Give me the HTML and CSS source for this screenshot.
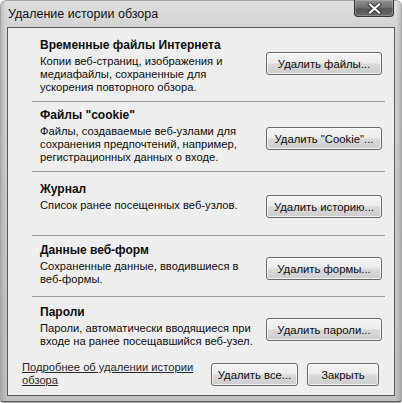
FILE: index.html
```html
<!DOCTYPE html>
<html lang="ru">
<head>
<meta charset="utf-8">
<title>Удаление истории обзора</title>
<link rel="stylesheet" href="styles.css">
</head>
<body>
<div class="window">
  <div class="titlebar">
    <span class="caption">Удаление истории обзора</span>
    <div class="close" aria-label="Закрыть">
      <svg width="15" height="11" viewBox="0 0 15 11">
        <path d="M3 1.5 L12 9.5 M12 1.5 L3 9.5" stroke="#333333" stroke-width="4" stroke-linecap="square" fill="none"/>
        <path d="M3 1.5 L12 9.5 M12 1.5 L3 9.5" stroke="#f6f6f6" stroke-width="2.2" stroke-linecap="square" fill="none"/>
      </svg>
    </div>
  </div>
  <div class="client">
    <div class="sec sec-files">
      <div class="info">
        <div class="head">Временные файлы Интернета</div>
        <div class="desc">Копии веб-страниц, изображения и<br>медиафайлы, сохраненные для<br>ускорения повторного обзора.</div>
      </div>
      <button class="btn btn-row">Удалить файлы...</button>
    </div>
    <div class="sep"></div>
    <div class="sec sec-cookie">
      <div class="info">
        <div class="head">Файлы "cookie"</div>
        <div class="desc">Файлы, создаваемые веб-узлами для<br>сохранения предпочтений, например,<br>регистрационных данных о входе.</div>
      </div>
      <button class="btn btn-row">Удалить "Cookie"...</button>
    </div>
    <div class="sep"></div>
    <div class="sec sec-history">
      <div class="info">
        <div class="head">Журнал</div>
        <div class="desc">Список ранее посещенных веб-узлов.</div>
      </div>
      <button class="btn btn-row">Удалить историю...</button>
    </div>
    <div class="sep"></div>
    <div class="sec sec-forms">
      <div class="info">
        <div class="head">Данные веб-форм</div>
        <div class="desc">Сохраненные данные, вводившиеся в<br>веб-формы.</div>
      </div>
      <button class="btn btn-row">Удалить формы...</button>
    </div>
    <div class="sep"></div>
    <div class="sec sec-passwords">
      <div class="info">
        <div class="head">Пароли</div>
        <div class="desc">Пароли, автоматически вводящиеся при<br>входе на ранее посещавшийся веб-узел.</div>
      </div>
      <button class="btn btn-row">Удалить пароли...</button>
    </div>
    <div class="footer">
      <a class="more" href="#">Подробнее об удалении истории<br>обзора</a>
      <div class="actions">
        <button class="btn btn-all">Удалить все...</button>
        <button class="btn btn-close">Закрыть</button>
      </div>
    </div>
  </div>
</div>
</body>
</html>
```
FILE: styles.css
```css
html, body {
  margin: 0;
  padding: 0;
  background: #ffffff;
}

.window {
  width: 402px;
  height: 403px;
  box-sizing: border-box;
  display: flex;
  flex-direction: column;
  padding: 0 7px 7px 7px;
  border-radius: 6px 6px 3px 3px;
  font-family: "Liberation Sans", Arial, sans-serif;
  color: #0e0e0e;
  background:
    linear-gradient(90deg, rgba(0,0,0,0.14) 0, rgba(0,0,0,0) 6px, rgba(0,0,0,0) 396px, rgba(0,0,0,0.14) 402px),
    linear-gradient(180deg, #dedede 0, #d4d4d4 27px, #c9c9c9 200px, #c0c0c0 100%);
  box-shadow:
    inset 0 0 0 1px #a4a4a4,
    inset 0 -2px 0 0 #606060;
}

.titlebar {
  height: 27px;
  flex: none;
  display: flex;
  justify-content: space-between;
  align-items: flex-start;
  padding: 0 1px;
}

.caption {
  font-size: 12.5px;
  line-height: 15px;
  padding-top: 7px;
  color: #121212;
  white-space: nowrap;
}

.close {
  width: 40px;
  height: 17px;
  box-sizing: border-box;
  display: flex;
  align-items: center;
  justify-content: center;
  border: 1px solid #363636;
  border-top: none;
  border-radius: 0 0 4px 4px;
  background: linear-gradient(180deg, #8e8e8e 0, #737373 45%, #555555 55%, #686868 100%);
  box-shadow: inset 0 0 0 1px rgba(255,255,255,0.22);
}

.client {
  flex: 1;
  display: flex;
  flex-direction: column;
  border: 1px solid #5a5a5a;
  background: #eeeeee;
}

.sec {
  display: flex;
  justify-content: space-between;
  align-items: flex-start;
  padding-left: 32px;
  padding-right: 12px;
}

.sec-files { padding-top: 11px; padding-bottom: 7px; }
.sec-cookie { padding-top: 7px; padding-bottom: 7px; }
.sec-history { padding-top: 11px; padding-bottom: 17px; }
.sec-forms { padding-top: 8px; padding-bottom: 10px; }
.sec-passwords { padding-top: 9px; padding-bottom: 0; }

.head {
  font-size: 12px;
  line-height: 13px;
  font-weight: 700;
  white-space: nowrap;
  margin-bottom: 3px;
}

.desc {
  font-size: 11.2px;
  line-height: 13px;
  white-space: nowrap;
}

.sep {
  height: 1px;
  flex: none;
  margin: 0 9px 0 24px;
  background: #9a9a9a;
}

.btn {
  font-family: "Liberation Sans", Arial, sans-serif;
  font-size: 11.3px;
  color: #0e0e0e;
  height: 23px;
  box-sizing: border-box;
  padding: 0;
  border: 1px solid #6a6a6a;
  border-radius: 3px;
  background: linear-gradient(180deg, #f4f4f4 0, #ebebeb 48%, #d9d9d9 52%, #cdcdcd 100%);
  box-shadow: inset 0 0 0 1px rgba(255,255,255,0.7);
  white-space: nowrap;
}

.btn-row {
  width: 116px;
  margin-top: 13px;
  flex: none;
}

.sec-cookie .btn-row { margin-top: 18px; }
.sec-history .btn-row { margin-top: 12px; }
.sec-passwords .btn-row { margin-top: 12px; }

.footer {
  display: flex;
  justify-content: space-between;
  align-items: flex-start;
  padding: 13px 15px 0 14px;
}

.more {
  font-size: 11.2px;
  line-height: 13px;
  color: #2a2a2a;
  text-decoration: underline;
  white-space: nowrap;
}

.actions {
  display: flex;
  gap: 9px;
  margin-top: 2px;
}

.btn-all { width: 87px; }
.btn-close { width: 72px; }
```
